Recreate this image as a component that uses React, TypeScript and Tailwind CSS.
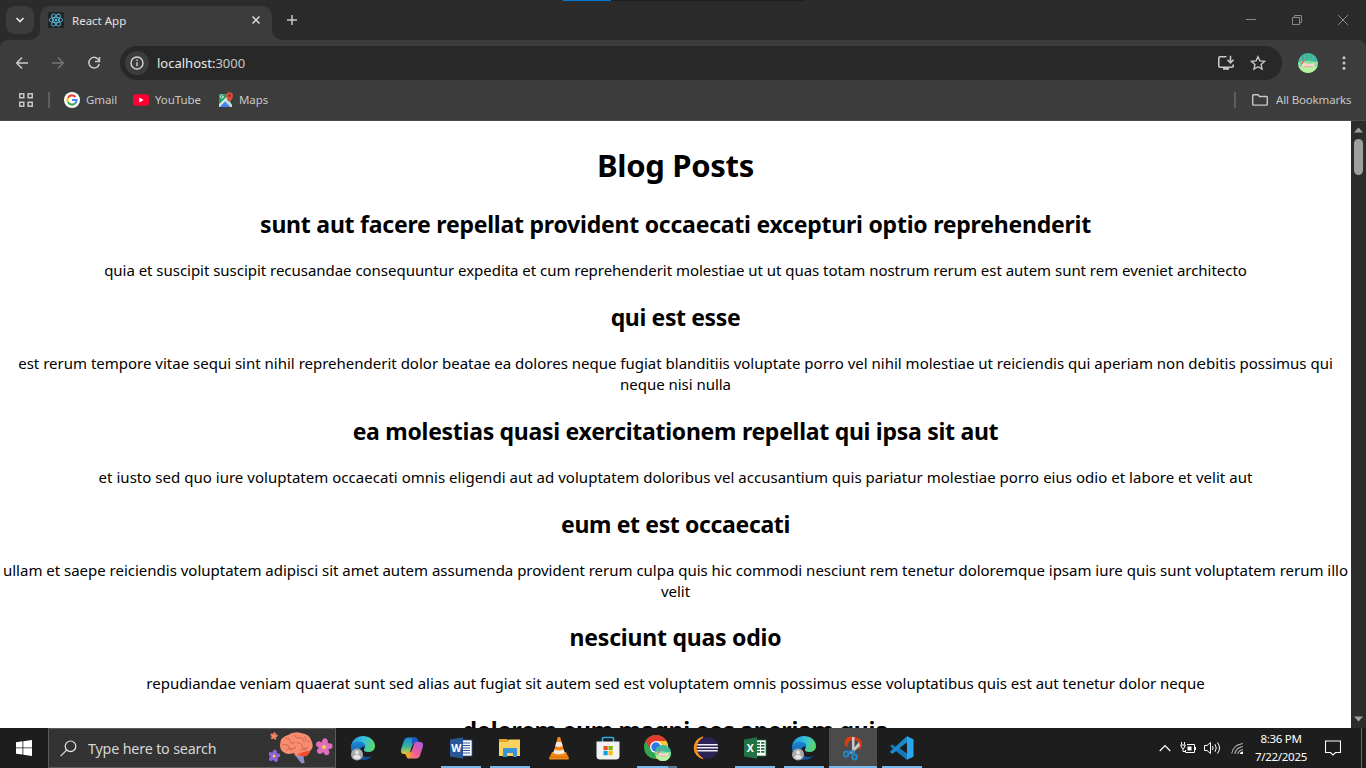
import React from "react";

type Post = { title: string; spacing: string; lines: [string, string][] };

const posts: Post[] = [
  {
    title: "sunt aut facere repellat provident occaecati excepturi optio reprehenderit",
    spacing: "tracking-[-0.23px]",
    lines: [["quia et suscipit suscipit recusandae consequuntur expedita et cum reprehenderit molestiae ut ut quas totam nostrum rerum est autem sunt rem eveniet architecto", "tracking-[-0.03px]"]],
  },
  {
    title: "qui est esse",
    spacing: "tracking-[-0.38px]",
    lines: [
      ["est rerum tempore vitae sequi sint nihil reprehenderit dolor beatae ea dolores neque fugiat blanditiis voluptate porro vel nihil molestiae ut reiciendis qui aperiam non debitis possimus qui", ""],
      ["neque nisi nulla", "tracking-[-0.03px]"],
    ],
  },
  {
    title: "ea molestias quasi exercitationem repellat qui ipsa sit aut",
    spacing: "tracking-[-0.28px]",
    lines: [["et iusto sed quo iure voluptatem occaecati omnis eligendi aut ad voluptatem doloribus vel accusantium quis pariatur molestiae porro eius odio et labore et velit aut", "tracking-[0.025px]"]],
  },
  {
    title: "eum et est occaecati",
    spacing: "tracking-[-0.36px]",
    lines: [
      ["ullam et saepe reiciendis voluptatem adipisci sit amet autem assumenda provident rerum culpa quis hic commodi nesciunt rem tenetur doloremque ipsam iure quis sunt voluptatem rerum illo", "tracking-[-0.01px]"],
      ["velit", ""],
    ],
  },
  {
    title: "nesciunt quas odio",
    spacing: "tracking-[-0.22px]",
    lines: [["repudiandae veniam quaerat sunt sed alias aut fugiat sit autem sed est voluptatem omnis possimus esse voluptatibus quis est aut tenetur dolor neque", "tracking-[-0.02px]"]],
  },
  { title: "dolorem eum magni eos aperiam quia", spacing: "tracking-[-0.26px]", lines: [] },
];

function ReactLogo() {
  return (
    <svg width="16" height="16" viewBox="0 0 16 16" className="shrink-0">
      <rect width="16" height="16" rx="1" fill="#222327" />
      <g fill="none" stroke="#57b9d6" strokeWidth="0.9">
        <ellipse cx="8" cy="8" rx="6.8" ry="2.6" />
        <ellipse cx="8" cy="8" rx="6.8" ry="2.6" transform="rotate(60 8 8)" />
        <ellipse cx="8" cy="8" rx="6.8" ry="2.6" transform="rotate(120 8 8)" />
      </g>
      <circle cx="8" cy="8" r="1.3" fill="#57b9d6" />
    </svg>
  );
}

function Avatar({ size }: { size: number }) {
  return (
    <svg width={size} height={size} viewBox="0 0 20 20" className="shrink-0">
      <clipPath id={"av" + size}><circle cx="10" cy="10" r="10" /></clipPath>
      <g clipPath={"url(#av" + size + ")"}>
        <rect width="20" height="20" fill="#45bd9e" />
        <path d="M5 0v7M9 0v6M13 0v6M17 0v8" stroke="#38a892" strokeWidth="1" />
        <path d="M0 9.500q5-2.500 10-1.500t10 .5v12H0z" fill="#8fdf9a" />
        <path d="M0 14q10-2 20 0v6H0z" fill="#b9f2a0" />
        <path d="M4 10.500q3-1 5 0t7-.5q1.500 3-1.500 4H6q-2.500-1-2-3.500z" fill="#f9d8d4" />
        <path d="M3 11.500Q4.500 10 5.500 8T8 7" stroke="#e2606e" strokeWidth="1.300" fill="none" />
        <path d="M5.500 13.700h9" stroke="#ee9a9c" strokeWidth="0.900" />
      </g>
    </svg>
  );
}

function TabStrip() {
  return (
    <div className="relative flex h-10 shrink-0 bg-[#2b2b2b]">
      <div className="absolute left-[563px] top-0 h-px w-12 bg-[#0078d7]" />
      <div className="absolute left-[611px] top-0 h-px w-[193px] bg-[#1f1f1f]" />
      <div className="ml-1.5 mt-1.5 flex h-7 w-7 items-center justify-center rounded-[9px] bg-[#3c3c3c]">
        <svg width="10" height="8" viewBox="0 0 10 8"><path d="M1.5 2l3.5 3.5L8.500 2" fill="none" stroke="#e3e3e3" strokeWidth="1.7" /></svg>
      </div>
      <div className="relative ml-1.5 mt-1.5 flex h-[34px] w-[232px] rounded-t-[10px] bg-[#3c3c3c]">
        <svg width="10" height="10" viewBox="0 0 10 10" className="absolute -left-2.5 bottom-0"><path d="M10 0v10H0A10 10 0 0 0 10 0z" fill="#3c3c3c" /></svg>
        <svg width="10" height="10" viewBox="0 0 10 10" className="absolute -right-2.5 bottom-0"><path d="M0 0v10h10A10 10 0 0 1 0 0z" fill="#3c3c3c" /></svg>
        <div className="ml-2 mt-1.5"><ReactLogo /></div>
        <span className="ml-2 mt-1.5 h-4 w-[170px] whitespace-nowrap text-[11.5px] leading-[17px] text-[#e3e3e3]">React App</span>
        <svg width="10" height="10" viewBox="0 0 10 10" className="ml-[9px] mt-[9px]"><path d="M1.500 1.500l7 7M8.500 1.500l-7 7" stroke="#dedede" strokeWidth="1.5" /></svg>
      </div>
      <svg width="12" height="12" viewBox="0 0 12 12" className="ml-[14px] mt-[14px]"><path d="M6 1v10M1 6h10" stroke="#c7c7c7" strokeWidth="1.5" /></svg>
      <div className="ml-auto mt-[14px] flex h-3 gap-[35px] pr-[17px]">
        <svg width="11" height="12" viewBox="0 0 11 12"><path d="M0 5.500h10" stroke="#8a8a8a" /></svg>
        <svg width="11" height="12" viewBox="0 0 11 12"><path d="M0.500 3.500h7v7h-7zM2.500 3.500v-2h7v7h-2" fill="none" stroke="#8a8a8a" /></svg>
        <svg width="11" height="12" viewBox="0 0 11 12"><path d="M0 1l10 10M10 1l-10 10" stroke="#8a8a8a" /></svg>
      </div>
    </div>
  );
}

function Toolbar() {
  return (
    <div className="bg-[#2b2b2b]">
      <div className="flex h-10 items-center rounded-t-lg bg-[#3c3c3c] pt-[6px]">
        <svg width="14" height="14" viewBox="0 0 14 14" className="ml-[15px]"><path d="M13 7H2M7 1.500L1.700 7L7 12.500" fill="none" stroke="#c9c9c9" strokeWidth="1.5" /></svg>
        <svg width="14" height="14" viewBox="0 0 14 14" className="ml-[22px]"><path d="M1 7h11M7 1.500L12.300 7L7 12.500" fill="none" stroke="#757575" strokeWidth="1.5" /></svg>
        <svg width="14" height="14" viewBox="0 0 14 14" className="ml-[22px]"><path d="M12 4.500A5.300 5.300 0 1 0 12.300 8M12.500 1v4.500H8" fill="none" stroke="#c9c9c9" strokeWidth="1.5" /></svg>
        <div className="ml-[19px] flex h-[34px] w-[1162px] items-center rounded-full bg-[#282828] pl-[5px] pr-4">
          <span className="flex h-6 w-6 items-center justify-center rounded-full bg-[#3c3c3c]">
            <svg width="14" height="14" viewBox="0 0 14 14"><circle cx="7" cy="7" r="6" fill="none" stroke="#d2d2d2" strokeWidth="1.400" /><path d="M7 6.300v4M7 3.600v1.500" stroke="#d2d2d2" strokeWidth="1.400" /></svg>
          </span>
          <span className="ml-2 whitespace-nowrap pt-px text-[13px] text-[#e8e8e8]">localhost:<span className="text-[#c7c7c7]">3000</span></span>
          <svg width="18" height="16" viewBox="0 0 18 16" className="ml-auto"><path d="M9.500 1.800H3a1.200 1.200 0 0 0-1.200 1.200v8A1.200 1.200 0 0 0 3 12.200h12a1.200 1.200 0 0 0 1.200-1.200V9.500M13.500 0.800v6.500M10.500 4.800l3 3l3-3" fill="none" stroke="#c7c7c7" strokeWidth="1.600" /><path d="M6 12h6v2.800H6z" fill="#c7c7c7" /></svg>
          <svg width="16" height="16" viewBox="0 0 16 16" className="ml-[15px]"><path d="M8 1.700l1.900 4.200l4.600.5l-3.400 3.100l.9 4.500l-4-2.300l-4 2.300l.9-4.500L1.500 6.400l4.600-.5z" fill="none" stroke="#c7c7c7" strokeWidth="1.400" /></svg>
        </div>
        <div className="ml-4"><Avatar size={20} /></div>
        <svg width="4" height="14" viewBox="0 0 4 14" className="ml-6" fill="#c7c7c7"><circle cx="2" cy="1.800" r="1.500" /><circle cx="2" cy="7" r="1.500" /><circle cx="2" cy="12.200" r="1.500" /></svg>
      </div>
    </div>
  );
}

function Bookmarks() {
  return (
    <div className="flex h-[41px] shrink-0 items-center border-b border-[#4a4a4a] bg-[#3c3c3c] text-[11.500px] tracking-[-0.1px] text-[#c7c7c7]">
      <svg width="14" height="14" viewBox="0 0 14 14" className="ml-[19px]" fill="none" stroke="#c7c7c7" strokeWidth="1.500"><path d="M.8.8h4v4h-4zM9.200.8h4v4h-4zM.8 9.200h4v4h-4zM9.200 9.200h4v4h-4z" /></svg>
      <div className="ml-[15px] h-4 w-0.5 bg-[#5e5e5e]" />
      <svg width="16" height="16" viewBox="0 0 16 16" className="ml-[14px]">
        <circle cx="8" cy="8" r="8" fill="#fff" />
        <g fill="none" strokeWidth="2.100">
          <path d="M11.500 5A4.600 4.600 0 0 0 4 5.700" stroke="#ea4335" />
          <path d="M4 5.700A4.600 4.600 0 0 0 4 10.300" stroke="#fbbc05" />
          <path d="M4 10.300A4.600 4.600 0 0 0 11 11.500" stroke="#34a853" />
          <path d="M11 11.500A4.600 4.600 0 0 0 12.600 8H8" stroke="#4285f4" />
        </g>
      </svg>
      <span className="ml-1.5 w-[32px] whitespace-nowrap">Gmail</span>
      <svg width="16" height="12" viewBox="0 0 16 12" className="ml-[15px]"><rect y=".3" width="16" height="11.400" rx="3" fill="#ff0033" /><path d="M6.300 3.500v5l4.200-2.500z" fill="#fff" /></svg>
      <span className="ml-1.5 w-[47px] whitespace-nowrap">YouTube</span>
      <svg width="16" height="16" viewBox="0 0 16 16" className="ml-4">
        <path d="M1 2h12v13H1z" fill="#1fa463" />
        <path d="M1.500 15L7 9.500l5.500 5.500z" fill="#4285f4" />
        <path d="M1 12.500L11.500 2L13 3.500L1.500 15H1z" fill="#e8eaed" />
        <path d="M7 9.500l2-2l5 5V15h-1.500z" fill="#d5d8dc" />
        <path d="M5.500 4.500H4M5.500 4.500a1.600 1.600 0 1 1-.6-1.300" stroke="#fff" strokeWidth=".7" fill="none" />
        <path d="M11.500 10Q8 6 8 3.700a3.500 3.500 0 0 1 7 0Q15 6 11.500 10z" fill="#dd4b3e" /><circle cx="11.500" cy="3.700" r="1.200" fill="#802620" />
      </svg>
      <span className="ml-[5px] whitespace-nowrap">Maps</span>
      <div className="ml-auto h-4 w-0.5 bg-[#5e5e5e]" />
      <svg width="16" height="12" viewBox="0 0 16 12" className="ml-4"><path d="M1.500.8h4.500l1.500 1.700h7a.8.8 0 0 1 .8.8v7a.8.8 0 0 1-.8.8h-13a.8.8 0 0 1-.8-.8V1.600A.8.8 0 0 1 1.500.8z" fill="none" stroke="#c7c7c7" strokeWidth="1.400" /></svg>
      <span className="ml-2 w-[76px] whitespace-nowrap tracking-[-0.150px]">All Bookmarks</span>
      <div className="w-[14px]" />
    </div>
  );
}

function Flower({ x, y, s, c }: { x: number; y: number; s: number; c: string }) {
  return (
    <g transform={`translate(${x} ${y}) scale(${s})`}>
      {[0, 72, 144, 216, 288].map((a) => <ellipse key={a} cx="0" cy="-5" rx="3.200" ry="4.300" fill={c} transform={`rotate(${a + 10})`} />)}
      <circle r="2" fill="#f8d64a" />
    </g>
  );
}

function EdgeIcon() {
  return (
    <svg width="26" height="26" viewBox="0 0 26 26">
      <defs>
        <linearGradient id="eg1" x1="0" y1="0.300" x2="1" y2="0.500"><stop offset="0" stopColor="#2494dc" /><stop offset=".5" stopColor="#35c1e0" /><stop offset="1" stopColor="#5dd864" /></linearGradient>
        <linearGradient id="eg2" x1="0" y1="0" x2="0" y2="1"><stop offset="0" stopColor="#1b8ad8" /><stop offset="1" stopColor="#104a94" /></linearGradient>
      </defs>
      <path d="M1 13C1 5 7 1 13 1s12 4 12 10c0 4-3 6-7 6c-3 0-4-1-4-2c0-2 1-2 1-4c0-3-3-4-6-4C5 7 2 9 1 13z" fill="url(#eg1)" />
      <path d="M1 13C1 9 5 6.500 9 6.500c4 0 6.500 2.500 6 5C12 11 10 13 10 16c0 4 4 6 8 6c2 0 4-1 5-2c-2 3-6 5-10 5C6 25 1 20 1 13z" fill="url(#eg2)" />
      <circle cx="7" cy="19.500" r="6" fill="#a9a9a9" /><circle cx="7" cy="17.500" r="2" fill="#e4e4e4" /><path d="M3.300 22.800c0-4 7.400-4 7.400 0q-3.700 3-7.400 0z" fill="#e4e4e4" />
    </svg>
  );
}

function CopilotIcon() {
  return (
    <svg width="24" height="24" viewBox="0 0 24 24">
      <defs>
        <linearGradient id="cp1" x1="0" y1="0" x2="0" y2="1"><stop offset="0" stopColor="#1688d8" /><stop offset=".55" stopColor="#35b59b" /><stop offset="1" stopColor="#eac92c" /></linearGradient>
        <linearGradient id="cp2" x1="1" y1="0" x2="0" y2="1"><stop offset="0" stopColor="#a65be8" /><stop offset=".5" stopColor="#ec5a98" /><stop offset="1" stopColor="#ff9a55" /></linearGradient>
      </defs>
      <path d="M8 1.500h7q2 0 3 3L19 7h-4q-2 0-3 3l-2 6q-.6 2-2 2H4q-4 0-2.800-5L4 4.500q1-3 4-3z" fill="url(#cp1)" />
      <path d="M12 1.500h3q2 0 3 3L19 7h-4q-2 0-3 2z" fill="#2453c4" />
      <path d="M16 22.500H9q-2 0-3-3L5 17h4q2 0 3-3l2-6q.6-2 2-2h4q4 0 2.800 5L20 19.500q-1 3-4 3z" fill="url(#cp2)" />
      <path d="M5 17h4q2 0 3-2l-2 6q-.5 1.500-1.500 1.500Q7 22 6 19.500z" fill="#f4a12b" />
    </svg>
  );
}

function OfficeIcon({ kind }: { kind: "W" | "X" }) {
  const c = kind === "W" ? "#2b579a" : "#217346";
  return (
    <svg width="24" height="22" viewBox="0 0 24 22">
      <path d="M12 3h11v16H12z" fill="#fff" stroke={c} strokeWidth=".8" />
      {kind === "W" ? <path d="M13 6h8M13 8.500h8M13 11h8M13 13.500h8M13 16h8" stroke={c} strokeWidth="1.200" /> : <path d="M14 5h3v1.800h-3zM18 5h3.500v1.800H18zM14 8h3v1.800h-3zM18 8h3.500v1.800H18zM14 11h3v1.800h-3zM18 11h3.500v1.800H18zM14 14h3v1.800h-3zM18 14h3.500v1.800H18z" fill={c} />}
      <path d="M1 2.500L14 .3v21.400L1 19.500z" fill={c} />
      <text x="7.300" y="15" textAnchor="middle" fill="#fff" className="font-['Open_Sans',sans-serif] text-[10.500px] font-bold">{kind}</text>
    </svg>
  );
}

function FolderIcon() {
  return (
    <svg width="24" height="22" viewBox="0 0 24 22">
      <path d="M1 2h8l2 2h-10z" fill="#e0a020" /><path d="M1 3.500h8.500L11 2.500h11V19H1z" fill="#fbd25f" /><path d="M1 5h9l1-1.500H1z" fill="#dda11e" />
      <path d="M5 12q0-1 1-1h12q1 0 1 1v8h-4v-4H9v4H5z" fill="#3c94d8" />
    </svg>
  );
}

function VlcIcon() {
  return (
    <svg width="22" height="24" viewBox="0 0 22 24">
      <path d="M4 16h14l3 6.500q0 1-1 1H2q-1 0-1-1z" fill="#f08a16" />
      <path d="M9.800 1h2.400L17 18q-6 3-12 0z" fill="#f58512" />
      <path d="M8.500 6h5l1.200 4.200q-3.700 1.500-7.400 0zM6.300 13.500q4.700 2 9.400 0l1 3.500q-5.700 2.500-11.400 0z" fill="#eceae6" />
      <path d="M1.500 21h19" stroke="#d96806" />
    </svg>
  );
}

function StoreIcon() {
  return (
    <svg width="24" height="24" viewBox="0 0 24 24">
      <path d="M6.500 6V2.500q0-1 1-1h9q1 0 1 1V6" fill="none" stroke="#29a9e0" strokeWidth="1.600" />
      <path d="M.5 5.500h23V20q0 3.500-3.500 3.500H4Q.5 23.500.5 20z" fill="#f2f2f2" />
      <path d="M7.500 10h4.200v4.200H7.500z" fill="#f04e23" /><path d="M12.500 10h4.200v4.200h-4.200z" fill="#7db700" /><path d="M7.500 15h4.200v4.200H7.500z" fill="#00a3ee" /><path d="M12.500 15h4.200v4.200h-4.200z" fill="#fdb813" />
    </svg>
  );
}

function ChromeIcon() {
  return (
    <div className="relative h-[26px] w-[26px]">
      <svg width="24" height="24" viewBox="0 0 24 24">
        <circle cx="12" cy="12" r="12" fill="#31a552" />
        <path d="M1.600 6A12 12 0 0 1 22.400 6L12 6.500L7 15z" fill="#e33b2e" />
        <path d="M22.400 6A12 12 0 0 1 12 24L17 14.500L12 6z" fill="#fcc934" />
        <circle cx="12" cy="12" r="6" fill="#fff" /><circle cx="12" cy="12" r="4.700" fill="#2f78e6" />
      </svg>
      <div className="absolute left-[11px] top-[10px]"><Avatar size={16} /></div>
    </div>
  );
}

function EclipseIcon() {
  return (
    <svg width="26" height="24" viewBox="0 0 26 24">
      <path d="M10 1A11 11 0 0 0 10 22.500A13 13 0 0 1 10 1z" fill="#f7941e" stroke="#f7941e" strokeWidth="1.200" />
      <circle cx="14.500" cy="11.800" r="10.800" fill="#2c2255" /><path d="M4.300 8.800h20.400M4 11.800h21M4.300 14.800h20.400" stroke="#f0eef8" strokeWidth="1.500" />
    </svg>
  );
}

function SnipIcon() {
  return (
    <svg width="20" height="26" viewBox="1 0 20 26">
      <path d="M3 11Q1 1 10 1.500Q20 2 20 9q0 5-5 7q4-4 1-9q-4-4-8-1Q5 8 6 12z" fill="#d83b12" />
      <path d="M10 2h2.500v16L10 14zM17 7l1 4l-9 8l-1.500-1z" fill="#c8c8c8" />
      <g fill="none" stroke="#1e88d0" strokeWidth="2"><circle cx="4" cy="19" r="2.500" /><circle cx="12.500" cy="22" r="2.400" /><path d="M6 18l4-2M12 19l-1-4" /></g>
    </svg>
  );
}

function CodeIcon() {
  return (
    <svg width="24" height="24" viewBox="0 0 24 24">
      <path d="M17 .3L5.500 11L2.500 8.500L.5 9.500v1.200L17 24z" fill="#1279bd" />
      <path d="M17.500 6L5 16L2 18L.4 16.500v-1.200L17 .3z" fill="#1988cd" />
      <path d="M17 .2l6.500 3v17.600l-6.500 3z" fill="#2ba5ee" />
      <path d="M17 6.500v11L9.500 12z" fill="#1d1d1d" />
    </svg>
  );
}

const apps: { icon: React.ReactNode; open?: boolean; active?: boolean }[] = [
  { icon: <EdgeIcon /> },
  { icon: <CopilotIcon /> },
  { icon: <OfficeIcon kind="W" />, open: true },
  { icon: <FolderIcon />, open: true },
  { icon: <VlcIcon /> },
  { icon: <StoreIcon /> },
  { icon: <ChromeIcon />, open: true },
  { icon: <EclipseIcon /> },
  { icon: <OfficeIcon kind="X" />, open: true },
  { icon: <EdgeIcon />, open: true },
  { icon: <SnipIcon />, open: true, active: true },
  { icon: <CodeIcon />, open: true },
];

function Taskbar() {
  return (
    <div className="flex h-10 shrink-0 bg-[#1d1d1d]">
      <div className="flex w-12 items-center justify-center">
        <svg width="16" height="16" viewBox="0 0 16 16" fill="#fff"><path d="M0 2.200L6.500 1.300v6.200H0zM7.300 1.200L16 0v7.500H7.300zM0 8.300h6.500v6.300L0 13.700zM7.300 8.300H16V16l-8.700-1.200z" /></svg>
      </div>
      <div className="flex w-72 items-center border border-[#5b5b5b] bg-[#333333]">
        <svg width="17" height="17" viewBox="0 0 17 17" className="ml-[11px]"><circle cx="10.500" cy="6.300" r="5.300" fill="none" stroke="#e6e6e6" strokeWidth="1.200" /><path d="M6.600 10.200L.6 16.200" stroke="#e6e6e6" strokeWidth="1.200" /></svg>
        <span className="ml-[11px] w-[129px] whitespace-nowrap pt-px text-[14.300px] tracking-[-0.170px] text-[#d6d6d6]">Type here to search</span>
        <svg width="66" height="34" viewBox="0 0 66 34" className="ml-[52px] shrink-0">
          <path d="M25 23l9-2l1.500 11l-3 .5z" fill="#8d8bc4" />
          <path d="M11 14Q11 6 19 4q6-4 13-2q9 1 11 9q2 6-2 9q-1 5-8 5q-6 1-8-3q-6 2-9 0q-5-2-5-8z" fill="#f78c71" />
          <path d="M28 24q6-4 13-4q-1 5-6 5.500z" fill="#f04e2c" />
          <path d="M16 8q4-2 5 2t5 1M25 4q2 4 6 3t4 5M13 14q5-2 7 2t7 0M28 12q4-1 5 3t6 1M36 5q0 5 5 6M17 19q3-3 6 0M31 19q4-2 7 0" fill="none" stroke="#c9584c" strokeWidth=".8" />
          <Flower x={5} y={5} s={0.420} c="#ee7c60" /><Flower x={5} y={25} s={0.680} c="#9163da" /><Flower x={55} y={16} s={0.940} c="#e06dbe" />
        </svg>
      </div>
      <div className="ml-[3px] flex gap-px">
        {apps.map((a, i) => (
          <div key={i} className={`relative flex w-12 items-center justify-center ${a.active ? "bg-[#4b4b4b]" : ""}`}>
            {a.icon}
            {a.open && <span className={`absolute bottom-0 h-0.5 bg-[#76b9ed] ${a.active ? "w-12" : "w-10"}`} />}
            {i === 6 && <span className="absolute bottom-0 right-1 h-0.5 w-[9px] bg-[#527b9b]" />}
          </div>
        ))}
      </div>
      <div className="ml-auto flex items-center text-white">
        <svg width="12" height="8" viewBox="0 0 12 8"><path d="M.7 7L6 1.500L11.300 7" fill="none" stroke="#fff" strokeWidth="1.200" /></svg>
        <svg width="17" height="12" viewBox="0 0 17 12" className="ml-[9px]"><path d="M7 2.500h7.500v8h-9V8M15.500 5v3" fill="none" stroke="#fff" /><path d="M7.500 4.500h4v4h-4z" fill="#fff" /><path d="M1.500 0v2.500M4.500 0v2.500M.5 3h5M1 3q0 3.500 2 3.500T5 3M3 6v3.500h2" stroke="#fff" fill="none" /></svg>
        <svg width="17" height="14" viewBox="0 0 17 14" className="ml-[7px]"><path d="M.5 4.500h2.500L6.500 1.500v11L3 9.500H.5zM8.500 5q1.200 2 0 4M11 3.200q2.500 3.800 0 7.600M13.500 1.500q4 5.500 0 11" fill="none" stroke="#fff" /></svg>
        <svg width="13" height="13" viewBox="0 0 13 13" className="ml-[10px]"><g fill="none" stroke="#b9b9b9" strokeWidth="1.100"><path d="M.7 11.500Q2 3 11.800 1.500M3.700 12Q4.500 6 11.800 4.500M6.700 12Q7.500 8.500 11.800 7.500" /></g><path d="M9 12q0-2.500 3-2.500V12z" fill="#fff" /></svg>
        <div className="ml-[10px] flex w-[54px] flex-col items-center whitespace-nowrap text-[11.500px] leading-[18px] tracking-[-0.300px]"><span>8:36 PM</span><span>7/22/2025</span></div>
        <svg width="16" height="16" viewBox="0 0 16 16" className="ml-[17px]"><path d="M.5 1h15v11.500h-5L8 15l-2.500-2.500h-5z" fill="none" stroke="#fff" strokeWidth="1.100" /></svg>
        <div className="ml-5 mr-1 h-10 w-px bg-[#6b6b6b]" />
      </div>
    </div>
  );
}

export default function App() {
  return (
    <div className="flex h-[768px] w-[1366px] flex-col overflow-hidden font-['Noto_Sans',sans-serif]">
      <TabStrip />
      <Toolbar />
      <Bookmarks />
      <div className="flex min-h-0 flex-1 bg-white">
        <main className="w-[1351px] overflow-hidden text-center text-black">
          <h1 className="mt-[23px] h-[43px] whitespace-nowrap text-[31px] font-bold leading-[43px] tracking-[-0.3px]">Blog Posts</h1>
          <div className="mt-[21.17px] flex flex-col gap-[19.92px]">
            {posts.map((p) => (
              <article key={p.title} className="flex flex-col gap-[19.92px]">
                <h2 className="flex h-8 justify-center whitespace-nowrap text-[23px] font-bold leading-8"><span className={p.spacing}>{p.title}</span></h2>
                {p.lines.length > 0 && (
                  <p className="text-[15px] leading-[21px]">
                    {p.lines.map(([t, c]) => <span key={t} className="flex justify-center whitespace-nowrap"><span className={c}>{t}</span></span>)}
                  </p>
                )}
              </article>
            ))}
          </div>
        </main>
        <div className="flex w-[15px] flex-col items-center bg-[#2c2c2c]">
          <svg width="9" height="6" viewBox="0 0 9 6" className="mt-1.5"><path d="M0 5.500L4.500 .5L9 5.500z" fill="#9f9f9f" /></svg>
          <div className="mt-1.5 h-9 w-[9px] rounded-full bg-[#9f9f9f]" />
          <svg width="9" height="6" viewBox="0 0 9 6" className="mb-1.5 mt-auto"><path d="M0 .5L4.500 5.500L9 .5z" fill="#9f9f9f" /></svg>
        </div>
      </div>
      <Taskbar />
    </div>
  );
}
